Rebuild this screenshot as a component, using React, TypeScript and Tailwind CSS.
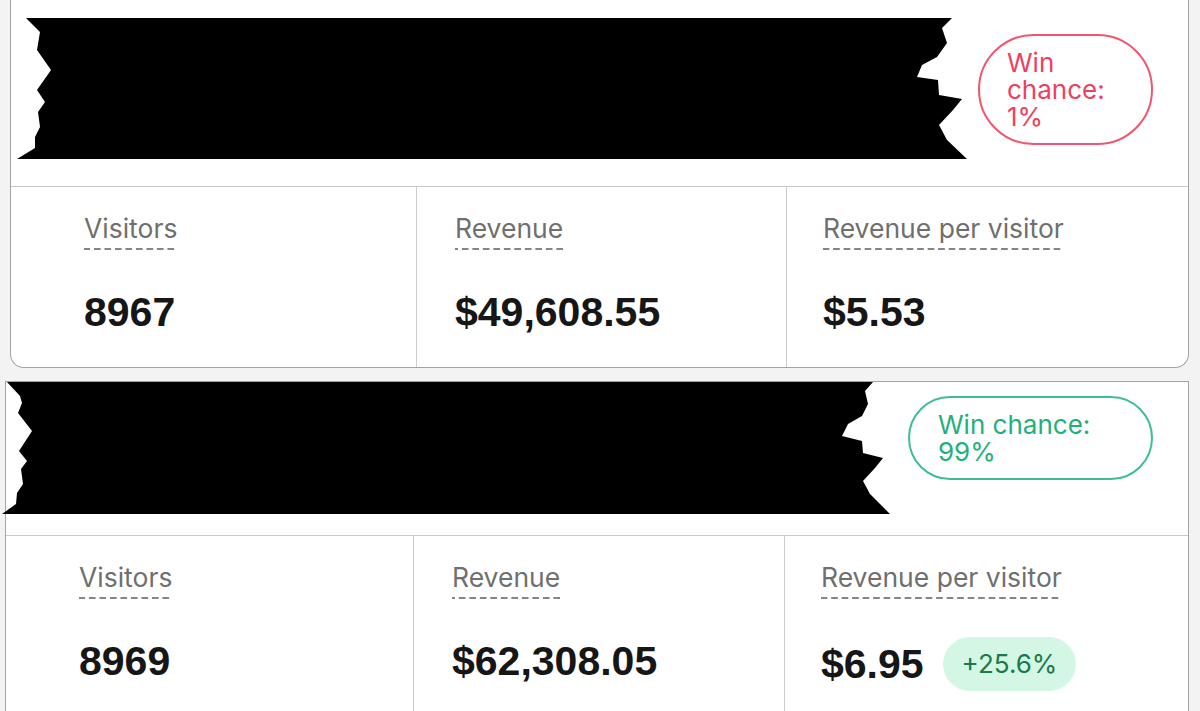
const sans = "font-['Inter','Liberation_Sans',sans-serif]";
const num = "font-['Liberation_Sans','Arial',sans-serif]";

type Stat = { label: string; value: string; delta?: string };

function Redacted({ w, h, points, className }: { w: number; h: number; points: string; className?: string }) {
  return (
    <svg width={w} height={h} viewBox={`0 0 ${w} ${h}`} className={`shrink-0 ${className ?? ""}`}>
      <polygon points={points} fill="#000" />
    </svg>
  );
}

function Label({ children }: { children: string }) {
  return (
    <span
      className={`${sans} inline-block pb-[7px] text-[26.5px] leading-[30px] text-[#6f6f6f] bg-[linear-gradient(to_right,#858585_65%,transparent_0)] bg-[length:10.5px_2px] bg-repeat-x bg-bottom`}
    >
      {children}
    </span>
  );
}

function StatCell({ stat, className }: { stat: Stat; className: string }) {
  return (
    <div className={className}>
      <Label>{stat.label}</Label>
      <div className="mt-[38px] flex items-center gap-[19px]">
        <span className={`${num} text-[41px] leading-[48px] font-bold text-[#161616]`}>{stat.value}</span>
        {stat.delta && (
          <span className={`${sans} rounded-full bg-[#d4f7e5] px-[19px] py-[11px] text-[26px] leading-[32px] text-[#177a4b]`}>
            {stat.delta}
          </span>
        )}
      </div>
    </div>
  );
}

function StatsRow({ stats, cols, h }: { stats: Stat[]; cols: string; h: string }) {
  return (
    <div className={`grid ${cols} ${h}`}>
      <StatCell stat={stats[0]} className="pl-[73px] pt-[26px]" />
      <StatCell stat={stats[1]} className="border-l border-[#cdcdcd] pl-[38px] pt-[26px]" />
      <StatCell stat={stats[2]} className="border-l border-[#cdcdcd] pl-[36px] pt-[26px]" />
    </div>
  );
}

export default function App() {
  return (
    <div className="h-[711px] w-[1200px] overflow-hidden bg-[#f3f3f3]">
      {/* losing variant */}
      <div className="pl-[10px] pr-[11px]">
        <div className="rounded-b-[14px] border-x border-b border-[#a3a3a3] bg-white overflow-hidden">
          <div className="flex h-[187px] items-start justify-between border-b border-[#c9c9c9] pr-[35px]">
            <Redacted
              w={951}
              h={141}
              className="ml-[6px] mt-[18px]"
              points="9,0 18,9 23,14 22,20 20,32 34,52 20,72 28,84 21,94 23,109 18,119 18,130 0,141 950,141 930,122 922,107 936,92 945,81 922,77 921,62 900,59 905,47 920,39 930,25 925,10 935,0"
            />
            <div
              className={`${sans} mt-[34px] w-[175px] rounded-full border-2 border-[#f0566f] px-[27px] py-[13px] text-[26px] leading-[27px] text-[#ef3f5e]`}
            >
              Win chance: 1%
            </div>
          </div>
          <StatsRow
            cols="grid-cols-[405px_370px_1fr]"
            h="h-[180px]"
            stats={[
              { label: "Visitors", value: "8967" },
              { label: "Revenue", value: "$49,608.55" },
              { label: "Revenue per visitor", value: "$5.53" },
            ]}
          />
        </div>
      </div>

      {/* winning variant */}
      <div className="mt-[13px] pl-[5px] pr-[11px]">
        <div className="border-x border-t border-[#a3a3a3] bg-white">
          <div className="flex h-[154px] items-start justify-between border-b border-[#c9c9c9] pr-[35px]">
            <Redacted
              w={888}
              h={132}
              className="-ml-[4px]"
              points="5,0 18,14 20,21 16,31 30,49 17,69 25,79 19,87 21,102 15,111 14,122 0,132 888,132 868,112 861,99 873,86 881,76 861,71 860,59 840,54 846,42 860,34 866,22 863,9 871,0"
            />
            <div
              className={`${sans} mt-[14px] w-[245px] rounded-full border-2 border-[#3dbf8f] px-[28px] py-[13px] text-[26px] leading-[27px] text-[#1fb07b]`}
            >
              Win chance: 99%
            </div>
          </div>
          <StatsRow
            cols="grid-cols-[407px_371px_1fr]"
            h="h-[200px]"
            stats={[
              { label: "Visitors", value: "8969" },
              { label: "Revenue", value: "$62,308.05" },
              { label: "Revenue per visitor", value: "$6.95", delta: "+25.6%" },
            ]}
          />
        </div>
      </div>
    </div>
  );
}
